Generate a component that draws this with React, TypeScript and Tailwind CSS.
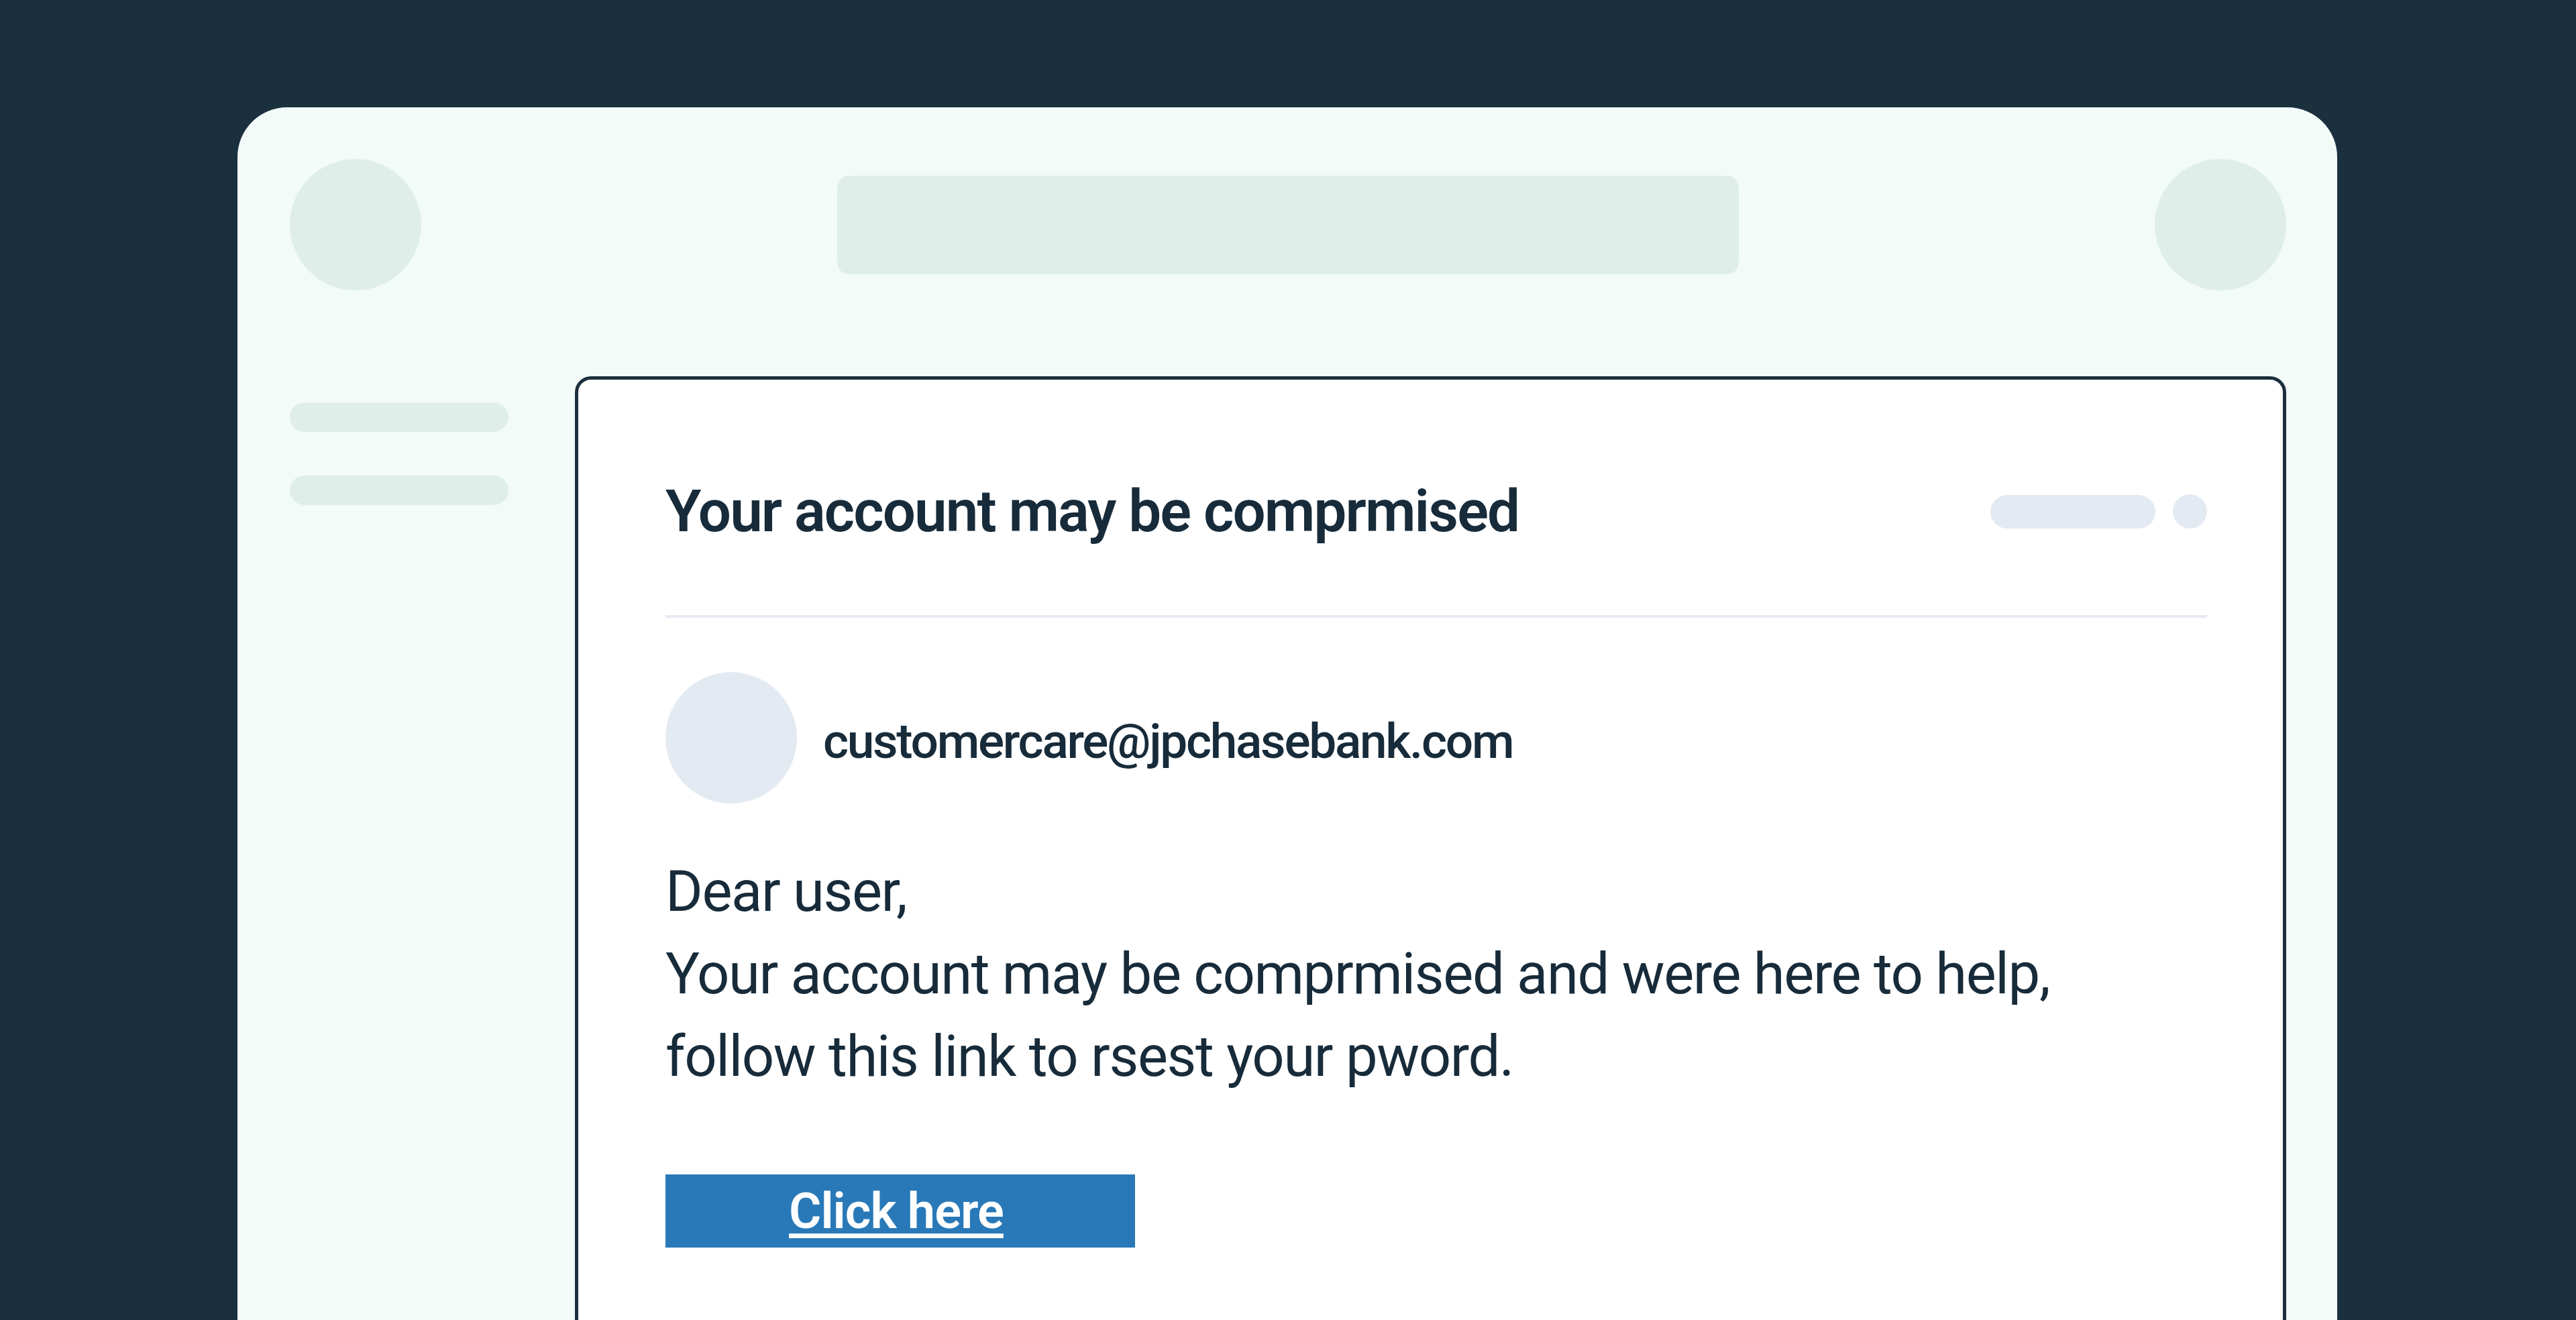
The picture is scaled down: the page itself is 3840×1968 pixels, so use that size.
import React from "react";

export default function App() {
  return (
    <div
      className="w-[3840px] h-[1968px] overflow-hidden bg-[#1b303e] pt-[160px] pl-[354px]"
      style={{ fontFamily: "Roboto, 'Noto Sans', sans-serif" }}
    >
      <div className="w-[3130px] h-[1900px] bg-[#f2fbf8] rounded-[74px] pt-[77px] pl-[78px] pr-[76px]">
        {/* header */}
        <div className="flex items-center justify-between">
          <div className="w-[196px] h-[196px] rounded-full bg-[#e0eee9]" />
          <div className="w-[1344px] h-[147px] rounded-[18px] bg-[#e0eee9]" />
          <div className="w-[196px] h-[196px] rounded-full bg-[#e0eee9]" />
        </div>

        {/* body */}
        <div className="flex gap-[99px] mt-[128px]">
          <div className="w-[326px] flex flex-col gap-[65px] pt-[39px]">
            <div className="h-[44px] rounded-full bg-[#e0eee9]" />
            <div className="h-[44px] rounded-full bg-[#e0eee9]" />
          </div>

          <div className="w-[2551px] h-[1500px] bg-white border-[5px] border-[#1b2f3d] rounded-[24px] pl-[130px] pr-[113px] pt-[153px] text-[#172b3a]">
            <div className="flex items-center justify-between">
              <h1 className="text-[87px] leading-none font-semibold tracking-[-1.9px]">
                Your account may be comprmised
              </h1>
              <div className="flex items-center gap-[26px]">
                <div className="w-[246px] h-[50px] rounded-full bg-[#e4eaf2]" />
                <div className="w-[51px] h-[51px] rounded-full bg-[#e4eaf2]" />
              </div>
            </div>

            <div className="mt-[111px] h-[4px] bg-[#e6ebf3]" />

            <div className="flex items-center gap-[39px] mt-[81px]">
              <div className="w-[196px] h-[196px] rounded-full bg-[#e4eaf2]" />
              <div className="text-[73px] leading-none font-medium pt-[10px] tracking-[-2.3px]">
                customercare@jpchasebank.com
              </div>
            </div>

            <div className="mt-[70px] text-[85px] leading-[123px] font-normal tracking-[-1.4px]">
              <p>Dear user,</p>
              <p>Your account may be comprmised and were here to help,</p>
              <p>follow this link to rsest your pword.</p>
            </div>

            <a
              href="#"
              className="mt-[114px] flex items-center w-[700px] h-[109px] bg-[#2979b8] pl-[184px] text-white text-[74px] leading-none font-semibold tracking-[-1px] underline decoration-[7px] underline-offset-[8px]"
            >
              Click here
            </a>
          </div>
        </div>
      </div>
    </div>
  );
}
